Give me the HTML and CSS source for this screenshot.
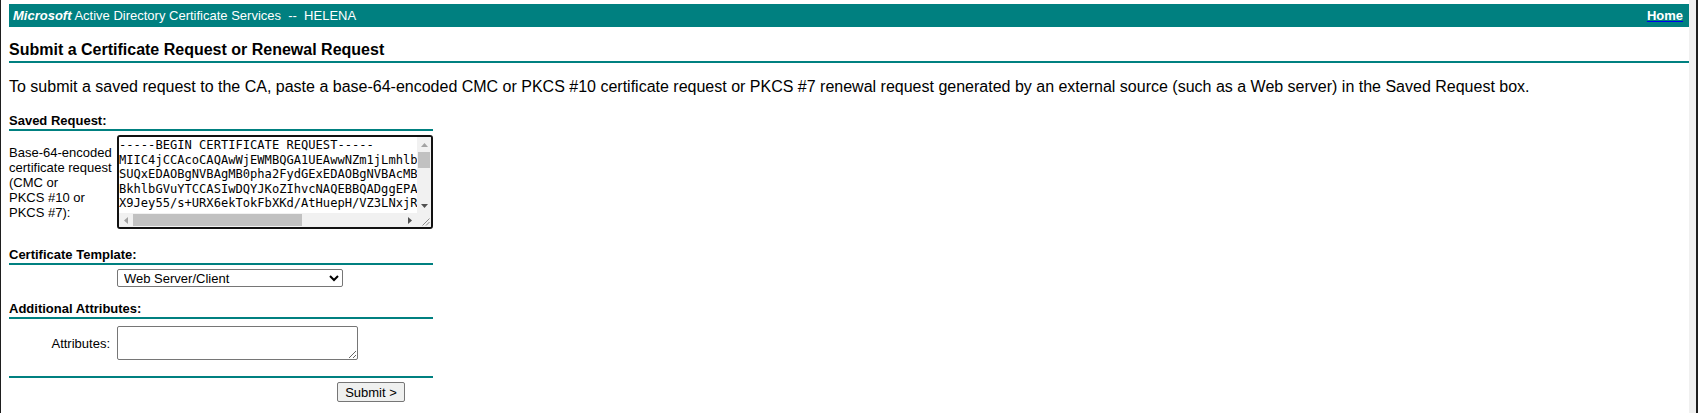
FILE: index.html
```html
<!DOCTYPE html>
<html lang="en">
<head>
<meta charset="utf-8">
<title>Microsoft Active Directory Certificate Services</title>
<link rel="stylesheet" href="styles.css">
</head>
<body>
<div class="frame">
  <div class="page">
    <div class="topbar">
      <span class="brand"><b><i>Microsoft</i></b> Active Directory Certificate Services &nbsp;--&nbsp; HELENA</span>
      <a class="home" href="#">Home</a>
    </div>
    <h1 class="title">Submit a Certificate Request or Renewal Request</h1>
    <p class="intro">To submit a saved request to the CA, paste a base-64-encoded CMC or PKCS #10 certificate request or PKCS #7 renewal request generated by an external source (such as a Web server) in the Saved Request box.</p>
    <form class="reqform">
      <div class="sect">Saved Request:</div>
      <div class="row row-req">
        <label class="lbl lbl-multi" for="req">Base-64-encoded<br>certificate request<br>(CMC or<br>PKCS #10 or<br>PKCS #7):</label>
        <div class="scrollbox">
          <textarea id="req" class="req" wrap="off" spellcheck="false">-----BEGIN CERTIFICATE REQUEST-----
MIIC4jCCAcoCAQAwWjEWMBQGA1UEAwwNZm1jLmhlbGVuYS5sb2NhbDELMAkGA1UE
SUQxEDAOBgNVBAgMB0pha2FydGExEDAOBgNVBAcMB0pha2FydGExDzANBgNVBAoM
BkhlbGVuYTCCASIwDQYJKoZIhvcNAQEBBQADggEPADCCAQoCggEBAL7x2hQy1Kc0
X9Jey55/s+URX6ekTokFbXKd/AtHuepH/VZ3LNxjR4pQm8sWc2vK1nY0a7dB6eTf
u3GkZQ8hM2rP9cVx1LbN4sYw0qT7eJd5fAo6mHiR3KzWgC8nUvE2pXlB1yDtS9aO
c4Fh7JqLm0NwZ2xV6bRk9TsYpE3uGa1dHiK8oQvC5jMnX4zWf0lAe7RbS2tUyP6g
Nq3VdK9hLxB1cZr8mTy4oWpJ2eGs0aFuH7kEvY5iDbQ3nCzX6lMt9RwUa4SgOj1p
2KfTz8yVbN0hQe5WdLr3mGxP7iAo1sJc9uYkF6tEnBv4HaXwR2qSl0ZgM8DpI3yK
ePm5VtC1aNr9oHfQ2kLz7bWs4xJd0gYuE6iM3nRcT8vAq1pKl5ShXy2Bw9FjO7Ue
oRt3Za8NcQ1mVx6LkPd0sHb4yGfJ2uWi9EeT5nCq7aMlK3rYg0SvXo8Dj1BpZh6t
XgKy2WmLb9Qe4nTd7cRv1HsPa0oJf5zUi3MxEk6qG8lNwBt2AhVr4DpCyS9jOe1u
aM3nVt8qLx0WgKc5JbR2yHe7PfZo4iUd6sTw1lXm9rGk0NhQp3EvBa2yCjS8ZtD
-----END CERTIFICATE REQUEST-----</textarea>
          <div class="vbar">
            <span class="sbtn"><svg width="7" height="4" viewBox="0 0 7 4"><polygon points="0,4 3.5,0 7,4" fill="#a3a3a3"/></svg></span>
            <span class="vtrack"><span class="vthumb"></span></span>
            <span class="sbtn"><svg width="7" height="4" viewBox="0 0 7 4"><polygon points="0,0 7,0 3.5,4" fill="#505050"/></svg></span>
          </div>
          <div class="hbar">
            <span class="sbtn"><svg width="4" height="7" viewBox="0 0 4 7"><polygon points="4,0 4,7 0,3.5" fill="#a3a3a3"/></svg></span>
            <span class="htrack"><span class="hthumb"></span></span>
            <span class="sbtn"><svg width="4" height="7" viewBox="0 0 4 7"><polygon points="0,0 4,3.5 0,7" fill="#505050"/></svg></span>
          </div>
          <div class="corner"><svg width="14" height="14" viewBox="0 0 14 14"><path d="M12.5 5.5 L5.5 12.5 M12.5 9 L9 12.5" stroke="#8a8a8a" stroke-width="1" fill="none"/></svg></div>
        </div>
      </div>
      <div class="sect sect-gap">Certificate Template:</div>
      <div class="row row-sel">
        <span class="lbl"></span>
        <select class="tmpl"><option>Web Server/Client</option></select>
      </div>
      <div class="sect sect-gap2">Additional Attributes:</div>
      <div class="row row-attr">
        <label class="lbl lbl-right" for="attr">Attributes:</label>
        <textarea id="attr" class="attr" spellcheck="false"></textarea>
      </div>
      <div class="rule"></div>
      <div class="row row-btn">
        <span class="lbl"></span>
        <button type="button" class="submit">Submit &gt;</button>
      </div>
    </form>
  </div>
  <div class="edge"></div>
</div>
</body>
</html>
```

FILE: styles.css
```css
html, body {
  margin: 0;
  padding: 0;
  background: #fff;
}

body {
  font-family: "Liberation Sans", Arial, sans-serif;
  color: #000;
  overflow: hidden;
}

.frame {
  display: flex;
  height: 413px;
}

.page {
  flex: 1;
  min-width: 0;
  border-left: 1px solid #1e1e1e;
  padding: 4px 0 0 8px;
}

.edge {
  width: 7px;
  background: #f0f0f0;
  border-right: 2px solid #1e1e1e;
}

.topbar {
  height: 23px;
  background: #008080;
  color: #fff;
  display: flex;
  align-items: center;
  justify-content: space-between;
  padding: 0 6px 0 4px;
  font-size: 13px;
}

.home {
  color: #fff;
  font-weight: bold;
  text-decoration: underline;
  text-decoration-color: #0000ee;
}

.title {
  margin: 14px 0 0;
  font-size: 16px;
  line-height: 18px;
  font-weight: bold;
  padding-bottom: 2px;
  border-bottom: 2px solid #008080;
}

.intro {
  margin: 15px 0 0;
  font-size: 16px;
  line-height: 18px;
}

.reqform {
  width: 424px;
  margin-top: 17px;
  font-size: 13px;
}

.sect {
  font-weight: bold;
  line-height: 16px;
  border-bottom: 2px solid #008080;
}

.sect-gap {
  margin-top: 18px;
}

.sect-gap2 {
  margin-top: 14px;
}

.row {
  display: grid;
  grid-template-columns: 104px auto;
  column-gap: 4px;
  align-items: center;
  justify-items: start;
}

.row-req {
  margin-top: 4px;
}

.row-sel {
  margin-top: 4px;
}

.row-attr {
  margin-top: 7px;
}

.row-btn {
  margin-top: 4px;
}

.lbl-multi {
  line-height: 15px;
}

.lbl-right {
  justify-self: end;
  padding-right: 3px;
}

/* saved request box with its scrollbars */
.scrollbox {
  box-sizing: border-box;
  width: 316px;
  height: 94px;
  border: 2px solid #111;
  border-radius: 3px;
  display: grid;
  grid-template-columns: 298px 14px;
  grid-template-rows: 76px 14px;
  background: #fff;
  overflow: hidden;
}

.req {
  box-sizing: border-box;
  width: 298px;
  height: 76px;
  margin: 0;
  padding: 1px 0 0 0;
  border: 0;
  border-bottom: 3px solid #fff;
  outline: none;
  font-family: "DejaVu Sans Mono", "Liberation Mono", monospace;
  font-size: 12.1px;
  line-height: 14.5px;
  color: #000;
  resize: none;
  overflow: hidden;
  white-space: pre;
  background: #fff;
}

.vbar {
  display: flex;
  flex-direction: column;
  background: #f1f1f1;
}

.hbar {
  display: flex;
  background: #f1f1f1;
}

.sbtn {
  flex: none;
  display: flex;
  align-items: center;
  justify-content: center;
}

.vbar .sbtn {
  height: 15px;
}

.hbar .sbtn {
  width: 14px;
}

.vtrack {
  flex: 1;
  display: flex;
  flex-direction: column;
  padding: 0 1px;
}

.vthumb {
  height: 16px;
  background: #c1c1c1;
}

.htrack {
  flex: 1;
  display: flex;
  padding: 1px 0;
}

.hthumb {
  width: 169px;
  background: #c1c1c1;
}

.corner {
  background: #f1f1f1;
  display: flex;
}

.tmpl {
  box-sizing: border-box;
  width: 226px;
  height: 18px;
  margin: 0;
  font-family: "Liberation Sans", Arial, sans-serif;
  font-size: 13px;
  border: 1px solid #767676;
  border-radius: 2px;
  background-color: #fff;
  color: #000;
  padding: 0 0 0 2px;
}

.attr {
  box-sizing: border-box;
  width: 241px;
  height: 34px;
  margin: 0;
  border: 1px solid #767676;
  border-radius: 2px;
  font-family: "Liberation Sans", Arial, sans-serif;
  font-size: 13px;
}

.rule {
  margin-top: 16px;
  height: 2px;
  background: #008080;
}

.submit {
  box-sizing: border-box;
  margin: 0 0 0 220px;
  width: 68px;
  height: 20px;
  padding: 0;
  font-family: "Liberation Sans", Arial, sans-serif;
  font-size: 13px;
  color: #000;
  background: #eff0ef;
  border: 1px solid #767676;
  border-radius: 2px;
}
```
